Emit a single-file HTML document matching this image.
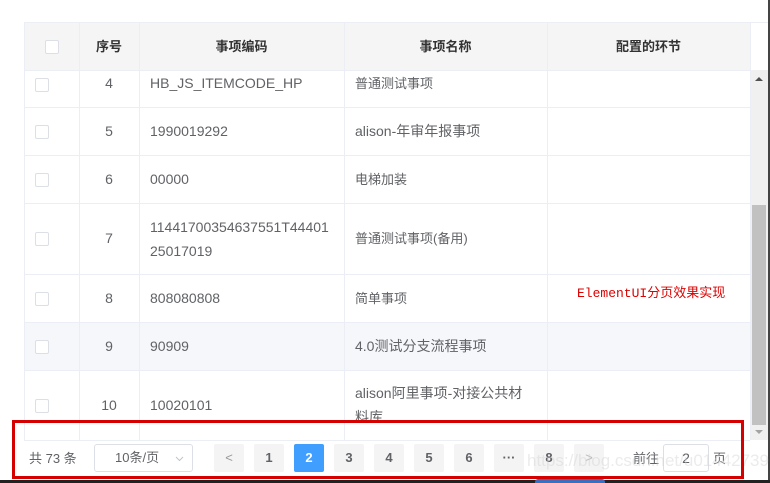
<!DOCTYPE html>
<html><head><meta charset="utf-8"><style>
*{margin:0;padding:0;box-sizing:border-box}
body{width:770px;height:483px;overflow:hidden;background:#fff;position:relative;font-family:"Liberation Sans","Noto Sans CJK SC",sans-serif;color:#606266;font-size:14px}
.a{position:absolute}
.hl{position:absolute;height:1px;background:#ebeef5}
.vl{position:absolute;width:1px;background:#ebeef5}
.cb{position:absolute;width:14px;height:14px;border:1px solid #dcdfe6;border-radius:2px;background:#fff;left:35px}
.t{position:absolute;white-space:nowrap;line-height:23px}
.c{text-align:center}
.pb{position:absolute;top:444px;width:30px;height:28px;background:#f4f4f5;border-radius:2px;color:#606266;font-weight:bold;font-size:13px;text-align:center;line-height:28px}
</style></head><body>
<div class="a" style="left:24px;top:22px;width:726px;height:48px;background:#f5f5f5"></div>
<div class="a" style="left:24px;top:322px;width:726px;height:48px;background:#f5f7fa"></div>
<div class="hl" style="left:24px;top:22px;width:744px"></div>
<div class="hl" style="left:24px;top:70px;width:726px"></div>
<div class="hl" style="left:24px;top:107px;width:726px"></div>
<div class="hl" style="left:24px;top:155px;width:726px"></div>
<div class="hl" style="left:24px;top:203px;width:726px"></div>
<div class="hl" style="left:24px;top:274px;width:726px"></div>
<div class="hl" style="left:24px;top:322px;width:726px"></div>
<div class="hl" style="left:24px;top:370px;width:726px"></div>
<div class="hl" style="left:24px;top:440px;width:726px"></div>
<div class="vl" style="left:24px;top:22px;height:418px"></div>
<div class="vl" style="left:79px;top:22px;height:418px"></div>
<div class="vl" style="left:139px;top:22px;height:418px"></div>
<div class="vl" style="left:344px;top:22px;height:418px"></div>
<div class="vl" style="left:547px;top:22px;height:418px"></div>
<div class="vl" style="left:750px;top:22px;height:418px"></div>
<div class="cb" style="left:45px;top:40px"></div>
<div class="t c" style="left:79px;width:60px;top:35px;color:#333;font-weight:bold;font-size:13px">序号</div>
<div class="t c" style="left:139px;width:205px;top:35px;color:#333;font-weight:bold;font-size:13px">事项编码</div>
<div class="t c" style="left:344px;width:203px;top:35px;color:#333;font-weight:bold;font-size:13px">事项名称</div>
<div class="t c" style="left:547px;width:203px;top:35px;color:#333;font-weight:bold;font-size:13px">配置的环节</div>
<div class="cb" style="top:78px"></div><div class="t c" style="left:79px;width:60px;top:72px">4</div><div class="t" style="left:150px;top:72px">HB_JS_ITEMCODE_HP</div><div class="t" style="left:355px;top:72px;font-size:13px">普通测试事项</div>
<div class="cb" style="top:125px"></div><div class="t c" style="left:79px;width:60px;top:120px">5</div><div class="t" style="left:150px;top:120px">1990019292</div><div class="t" style="left:355px;top:120px">alison-年审年报事项</div>
<div class="cb" style="top:173px"></div><div class="t c" style="left:79px;width:60px;top:168px">6</div><div class="t" style="left:150px;top:168px">00000</div><div class="t" style="left:355px;top:168px;font-size:13px">电梯加装</div>
<div class="cb" style="top:232px"></div><div class="t c" style="left:79px;width:60px;top:227px">7</div><div class="t" style="left:150px;top:215px;line-height:24px;white-space:normal">11441700354637551T44401<br>25017019</div><div class="t" style="left:355px;top:227px;font-size:13px">普通测试事项(备用)</div>
<div class="cb" style="top:292px"></div><div class="t c" style="left:79px;width:60px;top:287px">8</div><div class="t" style="left:150px;top:287px">808080808</div><div class="t" style="left:355px;top:287px;font-size:13px">简单事项</div>
<div class="t" style="left:577px;top:282px;color:#d00;font-family:'Liberation Mono','Noto Sans CJK SC',monospace;font-size:13px">ElementUI分页效果实现</div>
<div class="cb" style="top:340px"></div><div class="t c" style="left:79px;width:60px;top:335px">9</div><div class="t" style="left:150px;top:335px">90909</div><div class="t" style="left:355px;top:335px">4.0测试分支流程事项</div>
<div class="cb" style="top:399px"></div><div class="t c" style="left:79px;width:60px;top:394px">10</div><div class="t" style="left:150px;top:394px">10020101</div><div class="t" style="left:355px;top:382px">alison阿里事项-对接公共材</div><div class="t" style="left:355px;top:406px;height:14px;overflow:hidden">料库</div>
<div class="a" style="left:751px;top:70px;width:17px;height:370px;background:#f0f0f0"></div>
<div class="a" style="left:752px;top:205px;width:14px;height:220px;background:#c1c1c1"></div>
<div class="a" style="left:755px;top:77px;width:0;height:0;border-left:4px solid transparent;border-right:4px solid transparent;border-bottom:4px solid #505050"></div>
<div class="a" style="left:755px;top:430px;width:0;height:0;border-left:4px solid transparent;border-right:4px solid transparent;border-top:4px solid #a3a3a3"></div>
<div class="a" style="left:768px;top:0;width:2px;height:483px;background:#444"></div>
<div class="a" style="left:0;top:441px;width:768px;height:40px;background:#fff"></div>
<div class="t" style="left:29px;top:447px;font-size:13px">共 73 条</div>
<div class="a" style="left:94px;top:444px;width:99px;height:28px;border:1px solid #dcdfe6;border-radius:3px;font-size:13px;line-height:26px;padding-left:20px">10条/页<svg style="position:absolute;left:80px;top:11px" width="9" height="6" viewBox="0 0 9 6"><path d="M1 1 L4.5 4.5 L8 1" fill="none" stroke="#c0c4cc" stroke-width="1"/></svg></div>
<div class="pb" style="left:214px;font-weight:normal;color:#999">&lt;</div>
<div class="pb" style="left:254px">1</div>
<div class="pb" style="left:294px;background:#409eff;color:#fff">2</div>
<div class="pb" style="left:334px">3</div>
<div class="pb" style="left:374px">4</div>
<div class="pb" style="left:414px">5</div>
<div class="pb" style="left:454px">6</div>
<div class="pb" style="left:494px">···</div>
<div class="pb" style="left:534px">8</div>
<div class="pb" style="left:574px;font-weight:normal;color:#bbb">&gt;</div>
<div class="t" style="left:633px;top:447px;font-size:13px">前往</div>
<div class="a" style="left:663px;top:444px;width:46px;height:28px;border:1px solid #dcdfe6;border-radius:3px;text-align:center;line-height:26px">2</div>
<div class="t" style="left:713px;top:447px;font-size:13px">页</div>
<div class="t" style="left:527px;top:449px;color:rgba(210,210,210,.45);font-size:17px">https://blog.csdn.net/u014427391</div>
<div class="a" style="left:12px;top:420px;width:732px;height:59px;border:3px solid #d50000"></div>
<div class="a" style="left:0;top:480px;width:770px;height:3px;background:#222"></div>
<div class="a" style="left:535px;top:479px;width:70px;height:4px;background:#3a6fc0;border-radius:3px 3px 0 0"></div>
</body></html>
